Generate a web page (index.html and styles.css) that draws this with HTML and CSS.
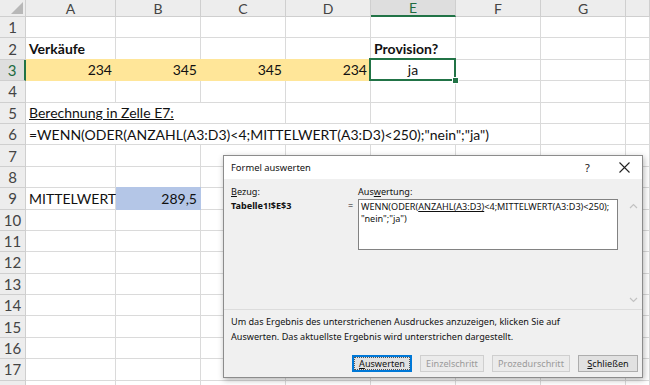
FILE: index.html
```html
<!DOCTYPE html>
<html lang="de">
<head>
    <meta charset="UTF-8">
    <title>Formel auswerten</title>
    <link rel="stylesheet" href="styles.css">
</head>
<body>
    <div class="sheet">
        <div class="corner"><svg width="12" height="12" viewBox="0 0 12 12"><polygon points="12,0 12,12 0,12" fill="#b8b8b8"/></svg></div>
        <div class="colhead">A</div>
        <div class="colhead">B</div>
        <div class="colhead">C</div>
        <div class="colhead">D</div>
        <div class="colhead active">E</div>
        <div class="colhead">F</div>
        <div class="colhead">G</div>
        <div class="colhead"></div>

        <div class="rowhead">1</div>
        <div class="cell"></div><div class="cell"></div><div class="cell"></div><div class="cell"></div>
        <div class="cell"></div><div class="cell"></div><div class="cell"></div><div class="cell"></div>

        <div class="rowhead">2</div>
        <div class="cell bold">Verkäufe</div><div class="cell"></div><div class="cell"></div><div class="cell"></div>
        <div class="cell bold">Provision?</div><div class="cell"></div><div class="cell"></div><div class="cell"></div>

        <div class="rowhead active">3</div>
        <div class="cell num fill-yellow">234</div><div class="cell num fill-yellow">345</div><div class="cell num fill-yellow">345</div><div class="cell num fill-yellow">234</div>
        <div class="cell center selected">ja</div><div class="cell"></div><div class="cell"></div><div class="cell"></div>

        <div class="rowhead">4</div>
        <div class="cell"></div><div class="cell"></div><div class="cell"></div><div class="cell"></div>
        <div class="cell"></div><div class="cell"></div><div class="cell"></div><div class="cell"></div>

        <div class="rowhead">5</div>
        <div class="cell span-3"><u>Berechnung in Zelle E7:</u></div><div class="cell"></div>
        <div class="cell"></div><div class="cell"></div><div class="cell"></div><div class="cell"></div>

        <div class="rowhead">6</div>
        <div class="cell span-6">=WENN(ODER(ANZAHL(A3:D3)&lt;4;MITTELWERT(A3:D3)&lt;250);"nein";"ja")</div>
        <div class="cell"></div><div class="cell"></div>

        <div class="rowhead">7</div>
        <div class="cell"></div><div class="cell"></div><div class="cell"></div><div class="cell"></div>
        <div class="cell"></div><div class="cell"></div><div class="cell"></div><div class="cell"></div>

        <div class="rowhead">8</div>
        <div class="cell"></div><div class="cell"></div><div class="cell"></div><div class="cell"></div>
        <div class="cell"></div><div class="cell"></div><div class="cell"></div><div class="cell"></div>

        <div class="rowhead">9</div>
        <div class="cell">MITTELWERT</div><div class="cell num fill-blue">289,5</div><div class="cell"></div><div class="cell"></div>
        <div class="cell"></div><div class="cell"></div><div class="cell"></div><div class="cell"></div>

        <div class="rowhead">10</div>
        <div class="cell"></div><div class="cell"></div><div class="cell"></div><div class="cell"></div>
        <div class="cell"></div><div class="cell"></div><div class="cell"></div><div class="cell"></div>

        <div class="rowhead">11</div>
        <div class="cell"></div><div class="cell"></div><div class="cell"></div><div class="cell"></div>
        <div class="cell"></div><div class="cell"></div><div class="cell"></div><div class="cell"></div>

        <div class="rowhead">12</div>
        <div class="cell"></div><div class="cell"></div><div class="cell"></div><div class="cell"></div>
        <div class="cell"></div><div class="cell"></div><div class="cell"></div><div class="cell"></div>

        <div class="rowhead">13</div>
        <div class="cell"></div><div class="cell"></div><div class="cell"></div><div class="cell"></div>
        <div class="cell"></div><div class="cell"></div><div class="cell"></div><div class="cell"></div>

        <div class="rowhead">14</div>
        <div class="cell"></div><div class="cell"></div><div class="cell"></div><div class="cell"></div>
        <div class="cell"></div><div class="cell"></div><div class="cell"></div><div class="cell"></div>

        <div class="rowhead">15</div>
        <div class="cell"></div><div class="cell"></div><div class="cell"></div><div class="cell"></div>
        <div class="cell"></div><div class="cell"></div><div class="cell"></div><div class="cell"></div>

        <div class="rowhead">16</div>
        <div class="cell"></div><div class="cell"></div><div class="cell"></div><div class="cell"></div>
        <div class="cell"></div><div class="cell"></div><div class="cell"></div><div class="cell"></div>

        <div class="rowhead">17</div>
        <div class="cell"></div><div class="cell"></div><div class="cell"></div><div class="cell"></div>
        <div class="cell"></div><div class="cell"></div><div class="cell"></div><div class="cell"></div>

        <div class="rowhead"></div>
        <div class="cell"></div><div class="cell"></div><div class="cell"></div><div class="cell"></div>
        <div class="cell"></div><div class="cell"></div><div class="cell"></div><div class="cell"></div>
    </div>

    <div class="dialog">
        <div class="titlebar">
            <span class="title">Formel auswerten</span>
            <span class="help">?</span>
            <span class="close">
                <svg width="11" height="11" viewBox="0 0 11 11"><path d="M0.5 0.5 L10.5 10.5 M10.5 0.5 L0.5 10.5" stroke="#222" stroke-width="1.1" fill="none"/></svg>
            </span>
        </div>
        <div class="dialog-body">
            <div class="eval-area">
                <div class="ref">
                    <div class="label"><u>B</u>ezug:</div>
                    <div class="ref-value">Tabelle1!$E$3</div>
                </div>
                <div class="equals">=</div>
                <div class="result">
                    <div class="label">Aus<u>w</u>ertung:</div>
                    <div class="result-box">WENN(ODER(<u>ANZAHL(A3:D3)</u>&lt;4;MITTELWERT(A3:D3)&lt;250);<br>"nein";"ja")</div>
                </div>
                <div class="scrollbar">
                    <svg width="9" height="6" viewBox="0 0 9 6"><path d="M1 5 L4.5 1.5 L8 5" stroke="#c2c2c2" stroke-width="1.2" fill="none"/></svg>
                    <svg width="9" height="6" viewBox="0 0 9 6"><path d="M1 1 L4.5 4.5 L8 1" stroke="#c2c2c2" stroke-width="1.2" fill="none"/></svg>
                </div>
            </div>
            <div class="hint">
                Um das Ergebnis des unterstrichenen Ausdruckes anzuzeigen, klicken Sie auf<br>
                Auswerten. Das aktuellste Ergebnis wird unterstrichen dargestellt.
            </div>
            <div class="buttons">
                <button class="btn focused"><span class="focus-ring"><u>A</u>uswerten</span></button>
                <button class="btn disabled">Einzelschritt</button>
                <button class="btn disabled">Prozedurschritt</button>
                <button class="btn"><u>S</u>chließen</button>
            </div>
        </div>
    </div>
</body>
</html>
```

FILE: styles.css
```css
body {
    margin: 0;
    background-color: #ffffff;
    overflow: hidden;
    font-family: Lato, "Liberation Sans", sans-serif;
}

.sheet {
    display: grid;
    grid-template-columns: 26px 90px 85px 85px 85px 85px 85px 85px 1fr;
    grid-template-rows: 17px;
    grid-auto-rows: 21.4px;
    width: 650px;
}

.corner,
.colhead,
.rowhead {
    background-color: #ededed;
    border-right: 1px solid #cfcfcf;
    border-bottom: 1px solid #cfcfcf;
    box-sizing: border-box;
    color: #444444;
    font-size: 14px;
    display: flex;
    align-items: center;
    justify-content: center;
}

.corner {
    align-items: flex-end;
    justify-content: flex-end;
    padding: 0 2px 2px 0;
}

.colhead.active {
    background-color: #dedede;
    color: #1e6b40;
    border-bottom: 2px solid #217346;
}

.rowhead {
    font-size: 15px;
}

.rowhead.active {
    background-color: #dedede;
    color: #1e6b40;
    border-right: 2px solid #217346;
}

.cell {
    border-right: 1px solid #dadada;
    border-bottom: 1px solid #dadada;
    box-sizing: border-box;
    font-size: 14px;
    color: #111111;
    padding: 0 3px;
    display: flex;
    align-items: center;
    white-space: nowrap;
    position: relative;
}

.cell.bold {
    font-weight: bold;
}

.cell.num {
    justify-content: flex-end;
}

.cell.center {
    justify-content: center;
}

.cell.span-3 {
    grid-column: span 3;
}

.cell.span-6 {
    grid-column: span 6;
}

.fill-yellow {
    background-color: #ffe699;
    border-color: #ffe699;
    box-shadow: 0 -1px 0 #ffe699;
}

.fill-blue {
    background-color: #b4c6e7;
    border-color: #b4c6e7;
    box-shadow: 0 -1px 0 #b4c6e7;
}

.cell.selected::after {
    content: "";
    position: absolute;
    left: -2px;
    top: -2px;
    right: -1px;
    bottom: -1px;
    border: 2px solid #217346;
}

.cell.selected::before {
    content: "";
    position: absolute;
    right: -4px;
    bottom: -4px;
    width: 5px;
    height: 5px;
    background-color: #217346;
    border: 1px solid #ffffff;
    z-index: 2;
}

/* dialog */

.dialog {
    position: absolute;
    left: 223px;
    top: 155px;
    width: 420px;
    height: 223px;
    box-sizing: border-box;
    border: 1px solid #8c8c8c;
    background-color: #f0f0f0;
    box-shadow: 1px 2px 6px rgba(0, 0, 0, 0.3);
    font-family: "Noto Sans", "Open Sans", sans-serif;
    font-size: 9.1px;
    color: #111111;
    display: flex;
    flex-direction: column;
}

.titlebar {
    height: 23px;
    background-color: #ffffff;
    display: flex;
    align-items: center;
    padding-left: 7px;
}

.title {
    flex: 1;
    font-size: 9.4px;
}

.help {
    font-size: 11px;
    width: 37px;
    text-align: center;
}

.close {
    width: 36px;
    display: flex;
    justify-content: center;
}

.dialog-body {
    flex: 1;
    display: flex;
    flex-direction: column;
}

.eval-area {
    height: 131px;
    box-sizing: border-box;
    border-bottom: 1px solid #dcdcdc;
    display: flex;
    padding: 5px 0 0 7px;
}

.label {
    height: 15px;
    line-height: 15px;
}

.ref {
    width: 112px;
}

.ref-value {
    font-weight: bold;
    line-height: 14px;
}

.equals {
    width: 15px;
    padding-top: 15px;
    line-height: 14px;
    text-align: center;
}

.result {
    width: 260px;
}

.result-box {
    height: 51px;
    box-sizing: border-box;
    border: 1px solid #828282;
    background-color: #ffffff;
    padding: 1px 2px;
    line-height: 12px;
    white-space: nowrap;
}

.scrollbar {
    margin: 14px 0 0 8px;
    width: 15px;
    height: 110px;
    display: flex;
    flex-direction: column;
    justify-content: space-between;
    align-items: center;
    padding: 5px 0;
    box-sizing: border-box;
}

.hint {
    padding: 4px 0 0 7px;
    line-height: 15px;
    height: 41px;
}

.buttons {
    display: flex;
    justify-content: flex-end;
    gap: 8px;
    padding-right: 4px;
}

.btn {
    height: 17px;
    padding: 0;
    font-family: inherit;
    font-size: 9.1px;
    color: #111111;
    background-color: #e1e1e1;
    border: 1px solid #adadad;
    display: flex;
    align-items: center;
    justify-content: center;
}

.btn.focused {
    width: 60px;
    border: 1px solid #0078d7;
    box-shadow: inset 0 0 0 1px #0078d7;
}

.focus-ring {
    border: 1px dotted #555555;
    padding: 0 4px;
    line-height: 11px;
}

.btn.disabled {
    background-color: #ebebeb;
    border-color: #cfcfcf;
    color: #9a9a9a;
}

.btn.disabled:nth-child(2) {
    width: 64px;
}

.btn.disabled:nth-child(3) {
    width: 78px;
}

.btn:last-child {
    width: 60px;
}
```
